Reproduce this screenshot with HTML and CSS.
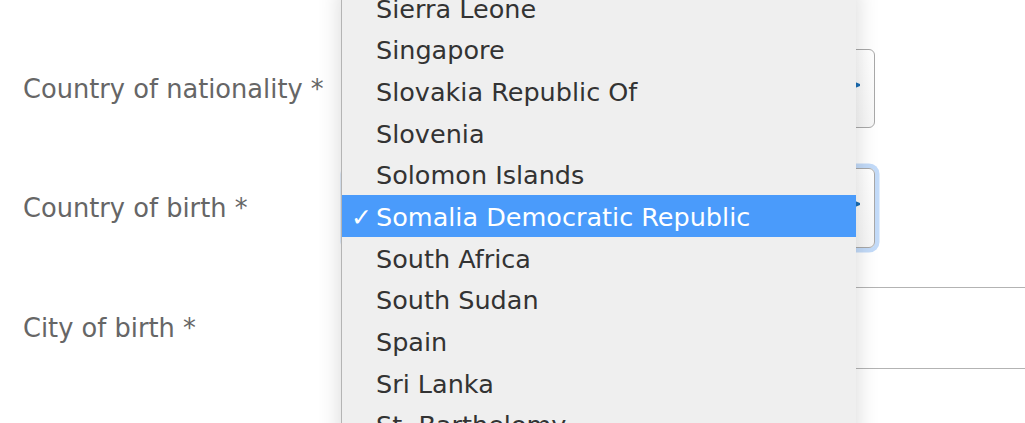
FILE: index.html
```html
<!DOCTYPE html>
<html>
<head>
<meta charset="utf-8">
<link rel="stylesheet" href="styles.css">
</head>
<body>
<div class="form">
  <div class="row row-prev"><span class="label label-prev">Place of residence *</span></div>
  <div class="row">
    <span class="label">Country of nationality *</span>
    <div class="select">
      <svg class="arrow" width="12" height="12" viewBox="0 0 12 12"><path d="M1 1 L11 5 L11 7 L1 11 Z" fill="#1a6db3"/></svg>
    </div>
  </div>
  <div class="row">
    <span class="label">Country of birth *</span>
    <div class="select focused">
      <svg class="arrow" width="12" height="12" viewBox="0 0 12 12"><path d="M1 1 L11 5 L11 7 L1 11 Z" fill="#1a6db3"/></svg>
    </div>
  </div>
  <div class="row">
    <span class="label">City of birth *</span>
    <div class="input"></div>
  </div>
</div>
<ul class="menu">
  <li class="item">Sierra Leone</li>
  <li class="item">Singapore</li>
  <li class="item">Slovakia Republic Of</li>
  <li class="item">Slovenia</li>
  <li class="item">Solomon Islands</li>
  <li class="item selected"><span class="check">✓</span>Somalia Democratic Republic</li>
  <li class="item">South Africa</li>
  <li class="item">South Sudan</li>
  <li class="item">Spain</li>
  <li class="item">Sri Lanka</li>
  <li class="item">St. Barthelomy</li>
</ul>
</body>
</html>
```

FILE: styles.css
```css
html, body {
  margin: 0;
  padding: 0;
  background: #ffffff;
  overflow: hidden;
  height: 423px;
  font-family: "DejaVu Sans", Verdana, sans-serif;
}

.form {
  display: flex;
  flex-direction: column;
  padding-left: 23px;
  margin-top: -90.5px;
}

.row {
  display: flex;
  align-items: center;
  height: 119.5px;
}

.row-prev {
  align-items: flex-end;
}

.label {
  width: 322px;
  flex: none;
  font-size: 25.7px;
  color: #666666;
  white-space: nowrap;
}

.label-prev {
  margin-bottom: 24px;
  color: #999999;
}

.select {
  flex: none;
  box-sizing: border-box;
  width: 530px;
  height: 79px;
  border: 1px solid #a9a9a9;
  border-radius: 6px;
  background: linear-gradient(#ffffff, #f7f7f7);
  display: flex;
  justify-content: flex-end;
  align-items: center;
  padding-right: 13px;
}

.select.focused {
  height: 80px;
  box-shadow: 0 0 0 4.5px #c3dbf9;
}

.arrow {
  margin-bottom: 8px;
}

.input {
  flex: none;
  box-sizing: border-box;
  width: 800px;
  height: 82px;
  border: 1px solid #b3b3b3;
}

.menu {
  position: absolute;
  left: 341px;
  top: -13.5px;
  width: 514px;
  margin: 0;
  padding: 0;
  list-style: none;
  background: #efefef;
  border-left: 1px solid #b4b4b4;
  box-shadow: 0 0 22px rgba(0, 0, 0, 0.16);
}

.item {
  position: relative;
  box-sizing: border-box;
  height: 41.7px;
  padding: 4px 0 0 34px;
  line-height: 37.7px;
  font-size: 25.5px;
  color: #333333;
  white-space: nowrap;
}

.item.selected {
  background: #4a9bfb;
  color: #ffffff;
}

.check {
  position: absolute;
  left: 9px;
  top: 4px;
  font-size: 25px;
  font-weight: bold;
}
```
